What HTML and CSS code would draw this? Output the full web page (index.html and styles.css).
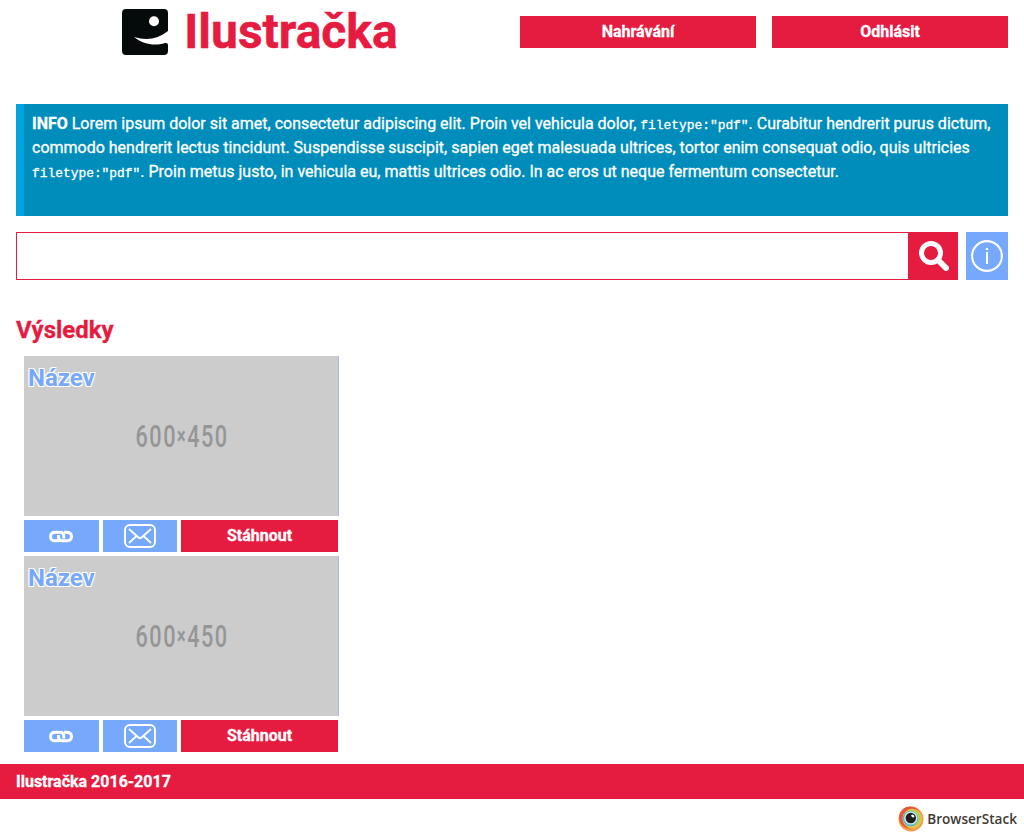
FILE: index.html
```html
<!DOCTYPE html>
<html lang="cs">
<head>
<meta charset="utf-8">
<title>Ilustračka</title>
<link rel="stylesheet" href="styles.css">
</head>
<body>
<svg class="defs" aria-hidden="true">
  <symbol id="link" viewBox="0 0 24 13">
    <path d="M9.500 10.800H6.500Q1.500 10.800 1.500 6.500T6.500 2.200H10.500Q14.800 2.200 14.800 6V8.500M15 2.200H17.500Q22.500 2.200 22.500 6.500T17.500 10.800H13.500Q9.500 10.800 9.500 7V5" fill="none" stroke="#fff" stroke-width="2.900"/>
  </symbol>
  <symbol id="mail" viewBox="0 0 32 24">
    <rect x="1" y="1" width="30" height="22" rx="5" fill="none" stroke="#fff" stroke-width="1.9"/>
    <path d="M5.500 5.500L14.500 13.500Q16 14.800 17.500 13.500L26.500 5.500M5.500 18.500L12.500 12M26.500 18.500L19.500 12" fill="none" stroke="#fff" stroke-width="1.800" stroke-linecap="round"/>
  </symbol>
</svg>
<header class="header">
  <h1 class="brand">
    <svg class="logo" viewBox="0 0 46 46"><path d="M4 0H42Q46 0 46 4V22C36 30 25 32 12 28C22 36 33 37 43 34Q46 33.500 46 36V42Q46 46 42 46H4Q0 46 0 42V4Q0 0 4 0Z" fill="#050a0b"/><circle cx="32" cy="12.300" r="5" fill="#fff"/></svg>
    <span class="brand-name">Ilustračka</span>
  </h1>
  <nav class="nav"><a class="button">Nahrávání</a><a class="button">Odhlásit</a></nav>
</header>
<main class="main">
  <p class="info"><span class="line"><b>INFO</b> Lorem ipsum dolor sit amet, consectetur adipiscing elit. Proin vel vehicula dolor, <code>filetype:"pdf"</code>. Curabitur hendrerit purus dictum,</span> <span class="line">commodo hendrerit lectus tincidunt. Suspendisse suscipit, sapien eget malesuada ultrices, tortor enim consequat odio, quis ultricies</span> <span class="line"><code>filetype:"pdf"</code>. Proin metus justo, in vehicula eu, mattis ultrices odio. In ac eros ut neque fermentum consectetur.</span></p>
  <form class="search">
    <input class="search-input" type="text" aria-label="Hledat">
    <button class="search-button" type="button" aria-label="Hledat"><svg width="30" height="30" viewBox="0 0 30 30"><circle cx="12" cy="12" r="9.500" fill="none" stroke="#fff" stroke-width="5"/><path d="M19 19L27 27" stroke="#fff" stroke-width="6" stroke-linecap="round"/></svg></button>
    <button class="info-button" type="button" aria-label="Info"><svg width="32" height="32" viewBox="0 0 32 32"><circle cx="16" cy="16" r="14.900" fill="none" stroke="#fff" stroke-width="2.100"/><path d="M16 12V24" stroke="#fff" stroke-width="2"/><circle cx="16" cy="9" r="1.300" fill="#fff"/></svg></button>
  </form>
  <h2 class="results-title">Výsledky</h2>
  <section class="results">
    <article class="card">
      <div class="picture"><svg class="dimensions" viewBox="0 0 314 160"><text transform="translate(111.5 90.500) scale(.7 1)" textLength="131" lengthAdjust="spacing">600<tspan class="times" dy="-2.500">×</tspan><tspan dy="2.500">450</tspan></text></svg><h3 class="card-title">Název</h3></div>
      <div class="actions"><a class="action action-link"><svg width="24" height="13"><use href="#link"/></svg></a><a class="action"><svg width="32" height="24"><use href="#mail"/></svg></a><a class="button">Stáhnout</a></div>
    </article>
    <article class="card">
      <div class="picture"><svg class="dimensions" viewBox="0 0 314 160"><text transform="translate(111.5 90.500) scale(.7 1)" textLength="131" lengthAdjust="spacing">600<tspan class="times" dy="-2.500">×</tspan><tspan dy="2.500">450</tspan></text></svg><h3 class="card-title">Název</h3></div>
      <div class="actions"><a class="action action-link"><svg width="24" height="13"><use href="#link"/></svg></a><a class="action"><svg width="32" height="24"><use href="#mail"/></svg></a><a class="button">Stáhnout</a></div>
    </article>
  </section>
</main>
<footer class="footer">Ilustračka 2016-2017</footer>
<div class="sponsor">
  <svg width="26" height="26" viewBox="0 0 26 26"><circle cx="13" cy="13" r="12.500" fill="#ee9b4b"/><circle cx="12" cy="11.500" r="10.900" fill="#e4573d"/><circle cx="14.200" cy="12.600" r="9.800" fill="#edc14c"/><circle cx="14" cy="12.200" r="8.600" fill="#b5d04d"/><circle cx="12.500" cy="12.600" r="7.600" fill="#55b4d6"/><circle cx="12.800" cy="12" r="6.600" fill="#d5eaf3"/><circle cx="12.800" cy="12" r="5.200" fill="#201d1e"/><ellipse cx="14.800" cy="10" rx="1.800" ry="1.200" fill="#fff" transform="rotate(35 14.800 10)"/></svg>
  <span class="sponsor-name">BrowserStack</span>
</div>
</body>
</html>
```
FILE: styles.css
```css
* { box-sizing: border-box; }
body { margin: 0; font: 16px/24px Roboto, sans-serif; color: #e51b3f; background: #fff; }
h1, h2, h3, p { margin: 0; }
.defs { display: none; }
svg { display: block; flex: none; }
.header { display: grid; grid-template-columns: 488px 488px; gap: 16px; height: 104px; padding: 0 16px; align-items: start; }
.brand { display: flex; justify-content: center; gap: 16px; height: 64px; align-items: center; }
.logo { width: 46px; height: 46px; }
.brand-name { font-size: 48px; line-height: 60px; font-weight: 700; letter-spacing: 0; -webkit-text-stroke: 0.5px; }
.nav { display: grid; grid-template-columns: 1fr 1fr; gap: 16px; padding-top: 16px; }
.button { display: flex; height: 32px; align-items: center; justify-content: center; background: #e51b3f; color: #fff; font-weight: 700; -webkit-text-stroke: 0.3px; }
.main { padding: 0 16px; }
.info { height: 112px; padding: 8px; border-left: 8px solid #00a5df; background: #008dbc; color: #fff; white-space: nowrap; -webkit-text-stroke: 0.3px; }
.line { display: block; }
.info code { font: 400 12.9px "Liberation Mono", monospace; }
.search { display: flex; height: 48px; margin-top: 16px; }
.search-input { flex: 1; min-width: 0; border: 1px solid #e51b3f; border-right: 0; background: #fff; padding: 0 8px; }
.search-button, .info-button { display: flex; align-items: center; justify-content: center; border: 0; padding: 0; }
.search-button { width: 50px; background: #e51b3f; margin-right: 8px; padding-left: 2px; }
.info-button { width: 42px; background: #76a9fb; }
.results-title { margin-top: 36px; font-size: 24px; line-height: 28px; font-weight: 700; -webkit-text-stroke: 0.3px; }
.results { display: grid; gap: 4px; width: 315px; margin: 12px 0 12px 8px; }
.card { display: grid; grid-template-columns: 315px; gap: 4px; }
.picture { position: relative; height: 160px; background: #ccc; border-right: 1px solid #a9bbe0; }
.dimensions { width: 314px; height: 160px; font: 500 31px Roboto, sans-serif; fill: #969696; }
.times { font-size: 23px; font-weight: 700; }
.card-title { position: absolute; left: 4px; top: 8px; font-size: 24px; line-height: 28px; color: #76a9fb; text-shadow: 1px 1px #fff, -1px -1px #fff, 1px -1px #fff, -1px 1px #fff; }
.actions { display: grid; grid-template-columns: 75px 74px 157px; gap: 4px; height: 32px; }
.action { display: flex; align-items: center; justify-content: center; background: #76a9fb; }
.action-link { padding-right: 1px; }
.footer { height: 35px; padding: 0 16px; background: #e51b3f; color: #fff; font-weight: 700; line-height: 35px; -webkit-text-stroke: 0.3px; }
.sponsor { display: flex; align-items: center; justify-content: flex-end; gap: 3px; height: 39px; padding-right: 7px; color: #413b36; }
.sponsor-name { font: 600 13.6px/20px "Open Sans", sans-serif; }
```
